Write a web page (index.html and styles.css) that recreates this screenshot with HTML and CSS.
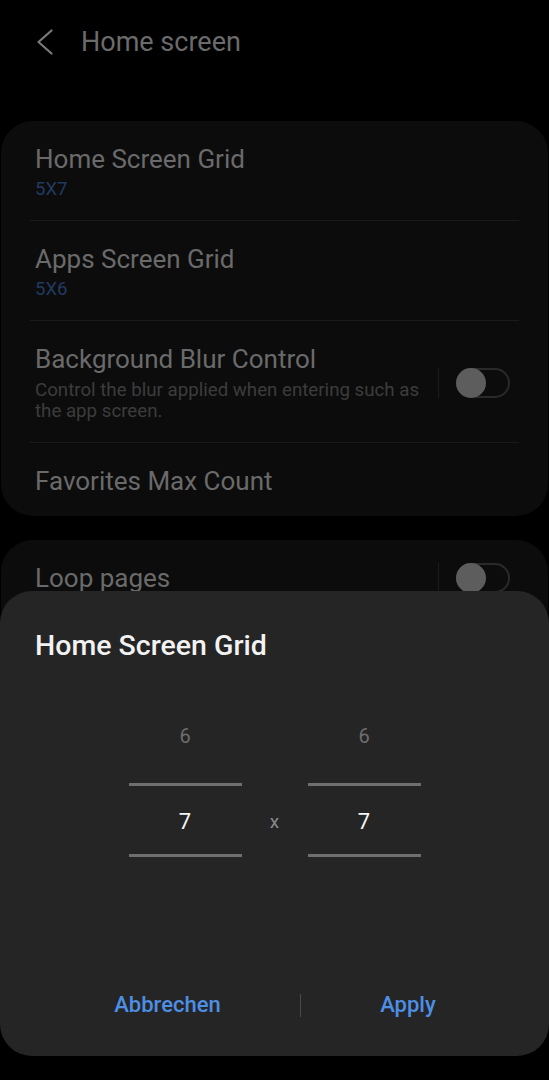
FILE: index.html
```html
<!DOCTYPE html>
<html lang="en">
<head>
    <meta charset="UTF-8">
    <meta name="viewport" content="width=device-width, initial-scale=1.0">
    <title>Home screen</title>
    <link rel="stylesheet" href="styles.css">
</head>
<body>
    <header class="topbar">
        <svg class="back" width="18" height="26" viewBox="0 0 18 26" aria-hidden="true">
            <polyline points="15.5,1.5 2.5,13 15.5,24.5" fill="none" stroke="#7a7a7a" stroke-width="2.2" stroke-linecap="round" stroke-linejoin="round"/>
        </svg>
        <h1 class="topbar-title">Home screen</h1>
    </header>

    <section class="card">
        <div class="row">
            <div class="row-text">
                <div class="row-title">Home Screen Grid</div>
                <div class="row-value">5X7</div>
            </div>
        </div>
        <div class="row">
            <div class="row-text">
                <div class="row-title">Apps Screen Grid</div>
                <div class="row-value">5X6</div>
            </div>
        </div>
        <div class="row">
            <div class="row-text">
                <div class="row-title">Background Blur Control</div>
                <div class="row-desc">Control the blur applied when entering such as the app screen.</div>
            </div>
            <span class="row-sep"></span>
            <span class="switch"><span class="knob"></span></span>
        </div>
        <div class="row row-last">
            <div class="row-text">
                <div class="row-title">Favorites Max Count</div>
            </div>
        </div>
    </section>

    <section class="card">
        <div class="row row-loop">
            <div class="row-text">
                <div class="row-title">Loop pages</div>
            </div>
            <span class="row-sep"></span>
            <span class="switch"><span class="knob"></span></span>
        </div>
    </section>

    <!-- bottom sheet dialog over the settings list -->
    <div class="dialog">
        <h2 class="dialog-title">Home Screen Grid</h2>

        <div class="picker">
            <div class="wheel">
                <div class="wheel-prev">6</div>
                <div class="wheel-line"></div>
                <div class="wheel-current">7</div>
                <div class="wheel-line"></div>
            </div>
            <div class="picker-x">x</div>
            <div class="wheel">
                <div class="wheel-prev">6</div>
                <div class="wheel-line"></div>
                <div class="wheel-current">7</div>
                <div class="wheel-line"></div>
            </div>
        </div>

        <div class="dialog-buttons">
            <button class="dialog-btn">Abbrechen</button>
            <span class="btn-sep"></span>
            <button class="dialog-btn">Apply</button>
        </div>
    </div>
</body>
</html>
```

FILE: styles.css
```css
body {
    margin: 0;
    width: 549px;
    height: 1080px;
    overflow: hidden;
    position: relative;
    background-color: #000;
    font-family: Roboto, "Noto Sans", sans-serif;
}

.topbar {
    display: flex;
    align-items: center;
    height: 32px;
    padding: 26px 0 0 36px;
}

.back {
    display: block;
}

.topbar-title {
    margin: 0 0 0 27px;
    font-size: 27px;
    font-weight: 400;
    line-height: 32px;
    color: #6b6b6b;
}

.card {
    margin: 63px 1px 0;
    padding: 0 29px;
    background-color: #0c0c0c;
    border-radius: 32px;
}

.card + .card {
    margin-top: 24px;
}

.row {
    display: flex;
    align-items: center;
    padding: 22px 9px 18px 5px;
    border-bottom: 1px solid #1a1a1a;
}

.row:nth-child(3) {
    padding-bottom: 20px;
}

.row-last {
    padding-bottom: 19px;
    border-bottom: none;
}

.row-loop {
    padding-bottom: 46px;
    border-bottom: none;
}

.row-text {
    flex: 1;
    min-width: 0;
}

.row-title {
    font-size: 26px;
    line-height: 32px;
    color: #6a6a6a;
}

.row-value {
    font-size: 18.5px;
    line-height: 26px;
    padding-top: 1px;
    color: #213a60;
}

.row-desc {
    margin-top: 5px;
    padding-right: 8px;
    font-size: 18.7px;
    line-height: 21px;
    color: #3c3c3c;
}

.row-sep {
    width: 1px;
    height: 30px;
    margin: 0 17px 0 4px;
    background-color: #1c1c1c;
}

.switch {
    position: relative;
    box-sizing: border-box;
    width: 54px;
    height: 30px;
    border: 2px solid #2a2a2a;
    border-radius: 15px;
}

.knob {
    position: absolute;
    left: -2px;
    top: -2px;
    width: 30px;
    height: 30px;
    border-radius: 50%;
    background-color: #5d5d5d;
}

.dialog {
    position: absolute;
    top: 591px;
    left: 0;
    right: 0;
    bottom: 24px;
    display: flex;
    flex-direction: column;
    padding: 0 34px 0 35px;
    background-color: #252525;
    border-radius: 32px;
}

.dialog-title {
    margin: 38px 0 0;
    font-size: 28.5px;
    font-weight: 500;
    line-height: 34px;
    color: #f2f2f2;
}

.picker {
    display: flex;
    justify-content: center;
    margin: 49px 0 0 -1px;
}

.wheel {
    display: flex;
    flex-direction: column;
    width: 113px;
}

.wheel-prev {
    height: 44px;
    margin-bottom: 27px;
    text-align: center;
    font-size: 20px;
    line-height: 48px;
    color: #6e6e6e;
}

.wheel-line {
    height: 3px;
    background-color: #6f6f6f;
}

.wheel-current {
    height: 68px;
    text-align: center;
    font-size: 22px;
    line-height: 72px;
    color: #f5f5f5;
}

.picker-x {
    width: 66px;
    margin-top: 76px;
    text-align: center;
    font-size: 19px;
    line-height: 68px;
    color: #8a8a8a;
}

.dialog-buttons {
    display: flex;
    align-items: center;
    height: 60px;
    margin-top: auto;
    margin-bottom: 21px;
}

.dialog-btn {
    flex: 1 1 auto;
    padding: 0;
    border: none;
    background: none;
    font-family: Roboto, "Noto Sans", sans-serif;
    font-size: 22px;
    font-weight: 500;
    line-height: 60px;
    color: #4d8fe4;
    cursor: pointer;
}

.btn-sep {
    width: 1px;
    height: 23px;
    background-color: #4a4a4a;
}
```
